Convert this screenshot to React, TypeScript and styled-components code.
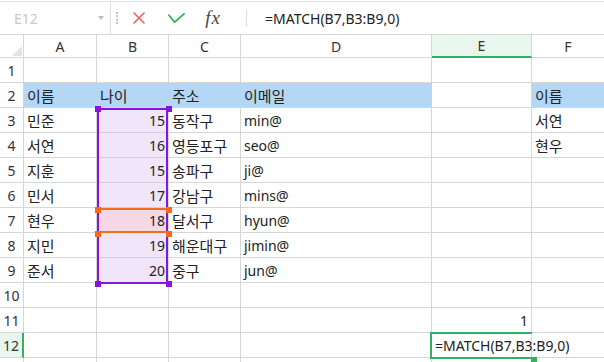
import React from 'react';
import styled, { createGlobalStyle, css } from 'styled-components';

type Fill = 'none' | 'blue' | 'range' | 'current';
type Align = 'left' | 'right';
interface CellData {
  text?: string;
  align?: Align;
  fill?: Fill;
}

const GRID = '#d6d6d6';
const GREEN = '#2fb35e';
const PURPLE = '#8a14d9';
const ORANGE = '#f26b1d';

const fillColor: Record<Fill, string> = {
  none: 'transparent',
  blue: '#b4d7f5',
  range: '#f1e5fa',
  current: '#f6d8e4',
};

const Global = createGlobalStyle`
  html, body { margin: 0; padding: 0; background: #fff; overflow: hidden; }
  body {
    font-family: "Noto Sans", "Noto Sans CJK KR", sans-serif;
    color: #222;
  }
  * { box-sizing: border-box; }
`;

const Page = styled.div`
  width: 604px;
  height: 362px;
  overflow: hidden;
  padding-top: 1px;
  display: flex;
  flex-direction: column;
  background: #fff;
`;

const Toolbar = styled.div`
  flex: none;
  height: 34px;
  display: flex;
  align-items: center;
  border-top: 1px solid #e2e2e2;
  border-bottom: 1px solid #d6d6d6;
`;

const NameBox = styled.div`
  width: 111px;
  height: 100%;
  display: flex;
  align-items: center;
  justify-content: space-between;
  padding: 0 6px 0 14px;
  border-right: 1px solid #dcdcdc;
  font-size: 14px;
  color: #c9c9c9;
`;

const Caret = styled.span`
  width: 0;
  height: 0;
  border-left: 3.5px solid transparent;
  border-right: 3.5px solid transparent;
  border-top: 4px solid #bdbdbd;
`;

const DotSeparator = styled.span`
  margin-left: 5px;
  height: 12px;
  border-left: 2px dotted #c4c4c4;
`;

const Actions = styled.div`
  display: flex;
  align-items: center;
  gap: 7px;
  margin-left: 6px;
`;

const ActionButton = styled.span`
  width: 30px;
  height: 32px;
  display: flex;
  align-items: center;
  justify-content: center;
`;

const FxLabel = styled.span`
  font-family: "Liberation Serif", "DejaVu Serif", serif;
  font-style: italic;
  font-size: 19px;
  color: #474747;
  letter-spacing: 1px;
  line-height: 1;
  margin-top: -2px;
`;

const Divider = styled.span`
  margin-left: 18px;
  width: 1px;
  height: 17px;
  background: #dcdcdc;
`;

const FormulaText = styled.span`
  margin-left: 18px;
  font-size: 14px;
  color: #222;
  white-space: nowrap;
`;

const Sheet = styled.div`
  position: relative;
  flex: none;
`;

const Grid = styled.div`
  display: grid;
  grid-template-columns: 24px 73px 72px 72px 191px 100px 73px;
  grid-template-rows: 23px;
  grid-auto-rows: 25px;
`;

const Corner = styled.div`
  position: relative;
  border-right: 1px solid ${GRID};
  border-bottom: 1px solid ${GRID};
  &::after {
    content: '';
    position: absolute;
    right: 1px;
    bottom: 1px;
    width: 0;
    height: 0;
    border-left: 10px solid transparent;
    border-bottom: 10px solid #e3e3e3;
  }
`;

const ColHeader = styled.div<{ $active?: boolean }>`
  display: flex;
  align-items: center;
  justify-content: center;
  font-size: 14px;
  color: #333;
  border-right: 1px solid ${GRID};
  border-bottom: 1px solid ${GRID};
  ${(p) =>
    p.$active &&
    css`
      background: #e9f6ee;
      border-bottom: 2px solid ${GREEN};
    `}
`;

const RowHeader = styled.div<{ $active?: boolean }>`
  display: flex;
  align-items: center;
  justify-content: center;
  font-size: 14px;
  color: #333;
  border-right: 1px solid ${GRID};
  border-bottom: 1px solid ${GRID};
  ${(p) =>
    p.$active &&
    css`
      background: #e9f6ee;
      border-right: 2px solid ${GREEN};
    `}
`;

const Cell = styled.div<{ $fill: Fill; $align: Align; $hangul: boolean }>`
  display: flex;
  align-items: center;
  justify-content: ${(p) => (p.$align === 'right' ? 'flex-end' : 'flex-start')};
  padding: 0 3px;
  white-space: nowrap;
  font-size: ${(p) => (p.$hangul ? '15px' : '14px')};
  color: #222;
  background: ${(p) => fillColor[p.$fill]};
  border-right: 1px solid ${(p) => (p.$fill === 'blue' ? fillColor.blue : GRID)};
  border-bottom: 1px solid ${(p) => (p.$fill === 'range' || p.$fill === 'current' ? '#d6cce0' : GRID)};
`;

const RangeBox = styled.div`
  position: absolute;
  left: 97px;
  top: 73px;
  width: 71px;
  height: 176px;
  border: 2px solid ${PURPLE};
  pointer-events: none;
`;

const CurrentBand = styled.div`
  position: absolute;
  left: 99px;
  top: 173px;
  width: 67px;
  height: 25px;
  border-top: 2px solid ${ORANGE};
  border-bottom: 2px solid ${ORANGE};
  pointer-events: none;
`;

const ActiveBox = styled.div`
  position: absolute;
  left: 430px;
  top: 297px;
  width: 103px;
  height: 27px;
  border: 2px solid ${GREEN};
  border-right-color: transparent;
  pointer-events: none;
`;

const Handle = styled.span<{ $color: string }>`
  position: absolute;
  width: 6px;
  height: 6px;
  background: ${(p) => p.$color};
`;

const XIcon = () => (
  <svg width="12" height="12" viewBox="0 0 12 12">
    <path d="M1 1L11 11M11 1L1 11" stroke="#f25c5c" strokeWidth="1.6" strokeLinecap="round" />
  </svg>
);

const CheckIcon = () => (
  <svg width="17" height="11" viewBox="0 0 17 11">
    <path d="M1 2.2L6.6 9.2L16 0.8" stroke="#2db35b" strokeWidth="1.8" fill="none" strokeLinecap="round" strokeLinejoin="round" />
  </svg>
);

const columns = ['A', 'B', 'C', 'D', 'E', 'F'];

const people: [string, string, string, string, string][] = [
  ['민준', '15', '동작구', 'min@', '서연'],
  ['서연', '16', '영등포구', 'seo@', '현우'],
  ['지훈', '15', '송파구', 'ji@', ''],
  ['민서', '17', '강남구', 'mins@', ''],
  ['현우', '18', '달서구', 'hyun@', ''],
  ['지민', '19', '해운대구', 'jimin@', ''],
  ['준서', '20', '중구', 'jun@', ''],
];

const empty = (): CellData[] => columns.map(() => ({}));

const buildRows = (): CellData[][] => {
  const rows: CellData[][] = [];
  rows.push(empty());
  rows.push([
    { text: '이름', fill: 'blue' },
    { text: '나이', fill: 'blue' },
    { text: '주소', fill: 'blue' },
    { text: '이메일', fill: 'blue' },
    {},
    { text: '이름', fill: 'blue' },
  ]);
  people.forEach(([name, age, addr, mail, f], i) => {
    rows.push([
      { text: name },
      { text: age, align: 'right', fill: i === 4 ? 'current' : 'range' },
      { text: addr },
      { text: mail },
      {},
      { text: f },
    ]);
  });
  rows.push(empty());
  const r11 = empty();
  r11[4] = { text: '1', align: 'right' };
  rows.push(r11);
  const r12 = empty();
  r12[4] = { text: '=MATCH(B7,B3:B9,0)' };
  rows.push(r12);
  rows.push(empty());
  return rows;
};

const rows = buildRows();
const isHangul = (s?: string) => !!s && /[\uac00-\ud7a3]/.test(s);

const rangeHandles = [
  { x: 95, y: 71 },
  { x: 166, y: 71 },
  { x: 95, y: 246 },
  { x: 166, y: 246 },
];
const currentHandles = [
  { x: 95, y: 172 },
  { x: 166, y: 172 },
  { x: 95, y: 196 },
  { x: 166, y: 196 },
];

export default function App() {
  return (
    <>
      <Global />
      <Page>
        <Toolbar>
          <NameBox>
            <span>E12</span>
            <Caret />
          </NameBox>
          <DotSeparator />
          <Actions>
            <ActionButton>
              <XIcon />
            </ActionButton>
            <ActionButton>
              <CheckIcon />
            </ActionButton>
            <ActionButton>
              <FxLabel>fx</FxLabel>
            </ActionButton>
          </Actions>
          <Divider />
          <FormulaText>=MATCH(B7,B3:B9,0)</FormulaText>
        </Toolbar>
        <Sheet>
          <Grid>
            <Corner />
            {columns.map((c) => (
              <ColHeader key={c} $active={c === 'E'}>
                {c}
              </ColHeader>
            ))}
            {rows.map((row, ri) => (
              <React.Fragment key={ri}>
                <RowHeader $active={ri === 11}>{ri < 12 ? ri + 1 : ''}</RowHeader>
                {row.map((cell, ci) => (
                  <Cell
                    key={ci}
                    $fill={cell.fill ?? 'none'}
                    $align={cell.align ?? 'left'}
                    $hangul={isHangul(cell.text)}
                  >
                    {cell.text}
                  </Cell>
                ))}
              </React.Fragment>
            ))}
          </Grid>
          <RangeBox />
          <CurrentBand />
          {rangeHandles.map((h, i) => (
            <Handle key={`r${i}`} $color={PURPLE} style={{ left: h.x, top: h.y }} />
          ))}
          {currentHandles.map((h, i) => (
            <Handle key={`c${i}`} $color={ORANGE} style={{ left: h.x, top: h.y }} />
          ))}
          <ActiveBox />
          <Handle $color={GREEN} style={{ left: 531, top: 322 }} />
        </Sheet>
      </Page>
    </>
  );
}
